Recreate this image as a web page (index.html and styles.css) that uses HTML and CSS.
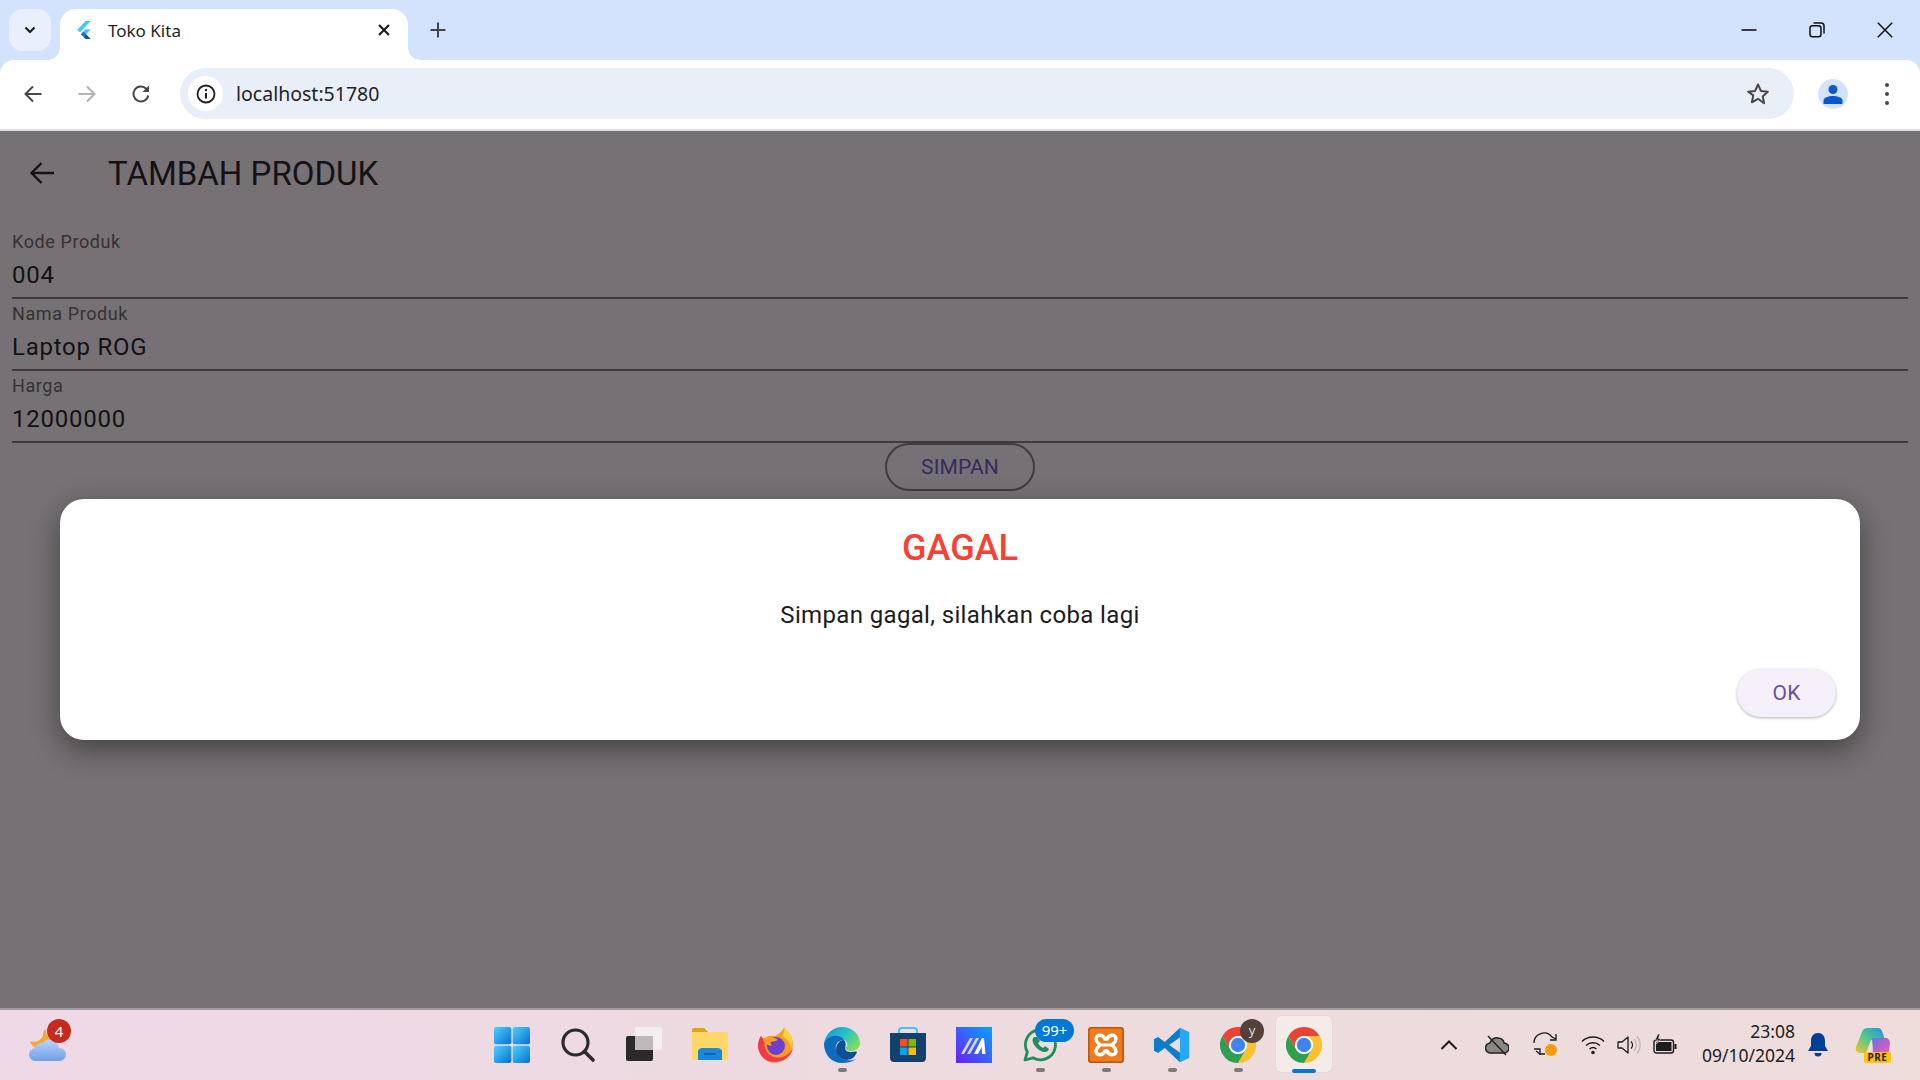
FILE: index.html
```html
<!DOCTYPE html>
<html>
  <head>
    <meta charset="utf-8">
    <title>Toko Kita</title>
    <link rel="stylesheet" href="styles.css">
  </head>
  <body>
    <svg class="defs" width="0" height="0">
      <defs>
        <symbol id="chrome" viewBox="0 0 48 48">
          <path fill="#ea4335" d="M24 12h20.8A24 24 0 0 0 3.2 12L13.6 30A12 12 0 0 1 24 12z"/>
          <path fill="#fbc02d" d="M24 12h20.8A24 24 0 0 1 24 48L34.4 30A12 12 0 0 0 24 12z"/>
          <path fill="#2e9e4f" d="M3.2 12A24 24 0 0 0 24 48L34.4 30A12 12 0 0 1 13.6 30z"/>
          <circle cx="24" cy="24" r="12" fill="#fff"/>
          <circle cx="24" cy="24" r="9.6" fill="#3f84ee"/>
        </symbol>
        <linearGradient id="winBlue" x1="0" y1="0" x2="1" y2="1">
          <stop offset="0" stop-color="#4fd0fb"/>
          <stop offset="1" stop-color="#0670d4"/>
        </linearGradient>
        <linearGradient id="edgeTop" x1="0" y1="0" x2="1" y2="0.6">
          <stop offset="0" stop-color="#0f8fd8"/>
          <stop offset="0.6" stop-color="#2cc5c0"/>
          <stop offset="1" stop-color="#7fdc5c"/>
        </linearGradient>
        <linearGradient id="mGrad" x1="0" y1="1" x2="1" y2="0">
          <stop offset="0" stop-color="#6a1ff5"/>
          <stop offset="1" stop-color="#06a4ff"/>
        </linearGradient>
        <linearGradient id="cloudGrad" x1="0" y1="0" x2="0" y2="1">
          <stop offset="0" stop-color="#bcd4f8"/>
          <stop offset="1" stop-color="#6f9fe8"/>
        </linearGradient>
        <linearGradient id="copilotA" x1="0" y1="1" x2="1" y2="0">
          <stop offset="0" stop-color="#f6c22c"/>
          <stop offset="0.5" stop-color="#4fc78c"/>
          <stop offset="1" stop-color="#1f8fe8"/>
        </linearGradient>
        <linearGradient id="copilotB" x1="0" y1="0" x2="1" y2="1">
          <stop offset="0" stop-color="#4b7be8"/>
          <stop offset="0.6" stop-color="#c85cc8"/>
          <stop offset="1" stop-color="#f0708a"/>
        </linearGradient>
      </defs>
    </svg>

    <!-- tab strip -->
    <div class="tabstrip">
      <div class="tab-search">
        <svg width="14" height="14" viewBox="0 0 14 14"><path d="M2.5 4.5 7 9l4.5-4.5" fill="none" stroke="#1f1f1f" stroke-width="2.2"/></svg>
      </div>
      <div class="tab">
        <svg class="favicon" width="16" height="18" viewBox="0 0 24 27">
          <path fill="#47c5fb" d="M14.3 0 2 13l4 4.3L22 0z"/>
          <path fill="#47c5fb" d="M14.3 12.4 7.4 19.7l4 4.2 10.6-11.5z"/>
          <path fill="#00569e" d="M11.4 23.9 14.4 27H22l-6.800-7.300z"/>
          <path fill="#0e7ac7" d="M7.400 19.700l4-4.100 3.900 4.100-3.900 4.200z"/>
        </svg>
        <span class="tab-title">Toko Kita</span>
        <svg class="tab-close" width="14" height="14" viewBox="0 0 14 14"><path d="M2 2l10 10M12 2 2 12" stroke="#1f1f1f" stroke-width="2.200"/></svg>
      </div>
      <svg class="new-tab" width="18" height="18" viewBox="0 0 18 18"><path d="M9 1.500v15M1.500 9h15" stroke="#444" stroke-width="2"/></svg>
      <div class="win-controls">
        <svg width="16" height="16" viewBox="0 0 16 16"><path d="M.5 8h15" stroke="#111" stroke-width="1.600"/></svg>
        <svg width="16" height="16" viewBox="0 0 16 16"><rect x="1" y="3.800" width="11" height="11" rx="2.500" fill="none" stroke="#111" stroke-width="1.500"/><path d="M4.500 1h7.500a3 3 0 0 1 3 3v7.500" fill="none" stroke="#111" stroke-width="1.500"/></svg>
        <svg width="16" height="16" viewBox="0 0 16 16"><path d="M.8.800l14.400 14.400M15.200.800.800 15.200" stroke="#111" stroke-width="1.500"/></svg>
      </div>
    </div>

    <!-- toolbar -->
    <div class="toolbar">
      <svg class="nav-btn" width="20" height="20" viewBox="0 0 20 20"><path d="M18.500 10H2.500M10 2.500 2.500 10l7.500 7.500" fill="none" stroke="#474747" stroke-width="2"/></svg>
      <svg class="nav-btn" width="20" height="20" viewBox="0 0 20 20"><path d="M1.500 10h16M10 2.500 17.500 10 10 17.500" fill="none" stroke="#b2b2b2" stroke-width="2"/></svg>
      <svg class="nav-btn" width="20" height="20" viewBox="0 0 20 20"><path d="M17.300 11.500A7.500 7.500 0 1 1 15.300 4.700L17.500 7" fill="none" stroke="#474747" stroke-width="2"/><path d="M18 1.500V8h-6.500z" fill="#474747"/></svg>
      <div class="omnibox">
        <div class="site-info">
          <svg width="20" height="20" viewBox="0 0 20 20"><circle cx="10" cy="10" r="8.500" fill="none" stroke="#1f1f1f" stroke-width="1.800"/><path d="M10 9v5.500" stroke="#1f1f1f" stroke-width="2"/><circle cx="10" cy="6" r="1.200" fill="#1f1f1f"/></svg>
        </div>
        <span class="url">localhost:51780</span>
        <svg class="star" width="24" height="24" viewBox="0 0 24 24"><path d="M12 2.500l2.900 6.400 6.900.8-5.100 4.700 1.400 6.900L12 16.800l-6.100 3.500 1.400-6.900L2.200 9.700l6.900-.8z" fill="none" stroke="#474747" stroke-width="2" stroke-linejoin="round"/></svg>
      </div>
      <div class="avatar">
        <svg width="20" height="20" viewBox="0 0 20 20"><circle cx="10" cy="5.500" r="4.500" fill="#0b57d0"/><path d="M.5 20v-3.500c0-3 5-4.500 9.500-4.500s9.500 1.500 9.500 4.500V20z" fill="#0b57d0"/></svg>
      </div>
      <div class="kebab"><span></span><span></span><span></span></div>
    </div>

    <!-- flutter page, dimmed by the dialog barrier -->
    <main class="page">
      <header class="appbar">
        <svg class="appbar-back" width="26" height="26" viewBox="0 0 26 26"><path d="M25 13H3M12.500 3 2.500 13l10 10" fill="none" stroke="#141214" stroke-width="2.400"/></svg>
        <h1 class="appbar-title">TAMBAH PRODUK</h1>
      </header>
      <form class="form">
        <div class="field">
          <label class="field-label">Kode Produk</label>
          <div class="field-value">004</div>
        </div>
        <div class="field">
          <label class="field-label">Nama Produk</label>
          <div class="field-value">Laptop ROG</div>
        </div>
        <div class="field">
          <label class="field-label">Harga</label>
          <div class="field-value">12000000</div>
        </div>
        <button type="button" class="save-btn">SIMPAN</button>
      </form>

      <div class="dialog">
        <h2 class="dialog-title">GAGAL</h2>
        <p class="dialog-text">Simpan gagal, silahkan coba lagi</p>
        <div class="dialog-actions">
          <button type="button" class="ok-btn">OK</button>
        </div>
      </div>
    </main>

    <!-- windows taskbar -->
    <footer class="taskbar">
      <div class="weather">
        <svg width="40" height="40" viewBox="0 0 40 40">
          <path d="M18 3a11 11 0 0 0-3 8 10 10 0 0 1-13 5c2 6 8 10 14 9l8-10c-4-2-7-7-6-12z" fill="#f5a733"/>
          <path d="M8 36a6.500 6.500 0 0 1-1-13c1-4 5-6 8-5 2-4 9-5 13-1 2 2 3 4 3 6a6.500 6.500 0 0 1 1 13z" fill="url(#cloudGrad)"/>
        </svg>
        <span class="weather-badge">4</span>
      </div>

      <div class="apps">
        <div class="app">
          <svg width="36" height="36" viewBox="0 0 36 36">
            <rect x="0" y="0" width="17.300" height="17.300" rx="2" fill="url(#winBlue)"/>
            <rect x="18.700" y="0" width="17.300" height="17.300" rx="2" fill="url(#winBlue)"/>
            <rect x="0" y="18.700" width="17.300" height="17.300" rx="2" fill="url(#winBlue)"/>
            <rect x="18.700" y="18.700" width="17.300" height="17.300" rx="2" fill="url(#winBlue)"/>
          </svg>
        </div>
        <div class="app">
          <svg width="36" height="36" viewBox="0 0 36 36"><circle cx="15.500" cy="15.500" r="12.500" fill="none" stroke="#2b2b2b" stroke-width="3.200"/><path d="M24.500 24.500 33 33" stroke="#2b2b2b" stroke-width="3.600" stroke-linecap="round"/></svg>
        </div>
        <div class="app">
          <svg width="36" height="36" viewBox="0 0 36 36"><rect x="0" y="9" width="27" height="25" rx="2" fill="#2a2a2a"/><rect x="9" y="0" width="27" height="23" rx="2" fill="#f4f0f0" fill-opacity=".88"/><rect x="9" y="9" width="18" height="14" fill="#bdb9b9"/></svg>
        </div>
        <div class="app">
          <svg width="36" height="36" viewBox="0 0 36 36"><path d="M0 3a2 2 0 0 1 2-2h10l4 4h18a2 2 0 0 1 2 2v4H0z" fill="#e0a412"/><path d="M0 5h36v26a2 2 0 0 1-2 2H0z" fill="#fcd768"/><path d="M6 33v-9a5 5 0 0 1 5-3h14a5 5 0 0 1 5 3v9z" fill="#1a88d8"/><path d="M12 27h12" stroke="#0d5a9c" stroke-width="1.600"/></svg>
        </div>
        <div class="app">
          <svg width="36" height="36" viewBox="0 0 36 36">
            <path d="M26 0c1 3 5 4 7 9 4 9 1 19-7 24S8 36 3 28C-1 22-1 15 3 9l2 3c3-3 8-4 12-3 4-2 8-5 9-9z" fill="#fd9a22"/>
            <path d="M26 0c1 3 5 4 7 9 2 5 1 9 0 13-1-7-5-11-9-13 2-3 3-6 2-9z" fill="#ffd43a"/>
            <path d="M3 9C-1 15-1 22 3 28c5 8 15 8 23 5 5-3 8-7 9-12-4 8-12 11-19 9C9 28 5 20 7 14z" fill="#ee3a4f"/>
            <circle cx="18" cy="19" r="9" fill="#6d3fd0"/>
            <path d="M5 12c5-2 11-2 15 1-3 1-5 2-8 2 1 1 2 3 1 4C9 18 6 16 5 12z" fill="#ff9a22"/>
          </svg>
        </div>
        <div class="app has-dot">
          <svg width="36" height="36" viewBox="0 0 36 36">
            <path d="M0 17C1 7 9 0 18 0c10 0 18 7 18 16 0 5-4 8-9 8-3 0-6-1-6-3 2-1 3-3 2-5-2-5-9-6-14-3-4 2-7 5-9 4z" fill="url(#edgeTop)"/>
            <path d="M0 17c2-6 8-9 13-8 3 0 6 2 7 4-6 0-9 4-8 10 1 5 5 9 10 10 5 1 8 0 10-1-4 3-9 4-14 4C8 36 0 28 0 17z" fill="#0c6cc0"/>
            <path d="M12 23c0-5 3-10 8-10 2 2 2 5 1 8 0 3 3 4 6 4 2 0 5-1 6 0-2 5-5 8-11 8-5-1-10-5-10-10z" fill="#0d4f96"/>
          </svg>
        </div>
        <div class="app">
          <svg width="36" height="36" viewBox="0 0 36 36">
            <path d="M9 7V4a3 3 0 0 1 3-3h12a3 3 0 0 1 3 3v3" fill="none" stroke="#3cc6ea" stroke-width="2"/>
            <path d="M0 6h36v25a4 4 0 0 1-4 4H4a4 4 0 0 1-4-4z" fill="#14406f"/>
            <rect x="10" y="12" width="7.500" height="7.500" fill="#f25022"/>
            <rect x="18.500" y="12" width="7.500" height="7.500" fill="#7fba00"/>
            <rect x="10" y="20.500" width="7.500" height="7.500" fill="#00a4ef"/>
            <rect x="18.500" y="20.500" width="7.500" height="7.500" fill="#ffb900"/>
          </svg>
        </div>
        <div class="app">
          <svg width="36" height="36" viewBox="0 0 36 36">
            <rect width="36" height="36" fill="url(#mGrad)"/>
            <path d="M5 27 14 11h3L8 27zM11 27l9-16h3l-9 16z" fill="#d8d4fb"/>
            <path d="M18 27l8-16h2l1.500 16H26l-.300-7-3.700 7z" fill="#fff"/>
          </svg>
        </div>
        <div class="app has-dot">
          <svg width="36" height="36" viewBox="0 0 36 36">
            <path d="M3 33l2.300-8A15 15 0 1 1 11 30.800z" fill="none" stroke="#1e8f5a" stroke-width="2.800" stroke-linejoin="round"/>
            <path d="M12 10c-2 2-2 5 1 9s7 6 10 6c2 0 4-2 4-3l-4-3-2 2c-2-1-4-3-5-5l2-2-3-4z" fill="#1e8f5a"/>
          </svg>
          <span class="count-badge">99+</span>
        </div>
        <div class="app has-dot">
          <svg width="36" height="36" viewBox="0 0 36 36">
            <rect width="36" height="36" rx="3" fill="#f07b1d"/>
            <rect x=".800" y=".800" width="34.400" height="34.400" rx="3" fill="none" stroke="#b9560f" stroke-width="1.600"/>
            <path d="M17 12C15 7 8 7 8 12c0 3 2 4 4 6-2 2-4 3-4 6 0 5 7 5 9 0h2c2 5 9 5 9 0 0-3-2-4-4-6 2-2 4-3 4-6 0-5-7-5-9 0z" fill="none" stroke="#fff" stroke-width="3.400"/>
            <path d="M13 18h10" stroke="#fff" stroke-width="3"/>
          </svg>
        </div>
        <div class="app has-dot">
          <svg width="36" height="36" viewBox="0 0 100 100">
            <path d="M72 2 98 14v72L72 98z" fill="#24a9f2"/>
            <path d="M72 2v27L42 50l30 21v27L30 58 11 72 0 66V34l11-6 19 14z" fill="#0a7cc8"/>
          </svg>
        </div>
        <div class="app has-dot">
          <svg width="36" height="36"><use href="#chrome"/></svg>
          <span class="profile-badge">y</span>
        </div>
        <div class="app is-active">
          <svg width="36" height="36"><use href="#chrome"/></svg>
        </div>
      </div>

      <div class="tray">
        <svg width="24" height="24" viewBox="0 0 24 24"><path d="M4.500 16 12 8.500 19.500 16" fill="none" stroke="#1c1c1c" stroke-width="2"/></svg>
        <svg width="24" height="24" viewBox="0 0 24 24"><path d="M6 20a5 5 0 0 1-1-10c1-4 5-6 8-5 3 0 6 2 6 5a5 5 0 0 1 0 10z" fill="#8b8785" stroke="#222" stroke-width="1.500"/><path d="M3 3l18 19" stroke="#222" stroke-width="1.500"/></svg>
        <svg width="24" height="26" viewBox="0 0 24 26"><path d="M1 11a10 10 0 0 1 18-6l4 2" fill="none" stroke="#1c1c1c" stroke-width="1.300"/><path d="M23 2v6h-6M1 17h6v6" fill="none" stroke="#1c1c1c" stroke-width="1.300"/><path d="M3 19l4 3h5" fill="none" stroke="#1c1c1c" stroke-width="1.300"/><circle cx="18" cy="18" r="6" fill="#f79a0e"/></svg>
        <div class="tray-status">
          <svg width="24" height="24" viewBox="0 0 24 24"><path d="M1 8.500a16 16 0 0 1 22 0M5 12.500a10.500 10.500 0 0 1 14 0M8.500 16a5.500 5.500 0 0 1 7 0" fill="none" stroke="#1c1c1c" stroke-width="1.500"/><circle cx="12" cy="19.500" r="1.800" fill="#1c1c1c"/></svg>
          <svg width="24" height="24" viewBox="0 0 24 24"><path d="M1 9v6h4l6 5V4L5 9z" fill="none" stroke="#1c1c1c" stroke-width="1.300" stroke-linejoin="round"/><path d="M14 8.500a5 5 0 0 1 0 7" fill="none" stroke="#1c1c1c" stroke-width="1.300"/><path d="M17 6a9 9 0 0 1 0 12M20 3.500a13 13 0 0 1 0 17" fill="none" stroke="#bdb8b6" stroke-width="1.300"/></svg>
          <svg width="24" height="24" viewBox="0 0 24 24"><rect x="1" y="7" width="19.500" height="13" rx="2.500" fill="none" stroke="#1c1c1c" stroke-width="1.400"/><rect x="3" y="9" width="15.500" height="9" fill="#1c1c1c"/><rect x="21.500" y="11" width="2" height="5" fill="#1c1c1c"/><path d="M5 1 2 7h3l-1.500 4L8 5.500H5.500L7 1z" fill="#1c1c1c" stroke="#efdddd" stroke-width=".6"/></svg>
        </div>
        <div class="clock">
          <span>23:08</span>
          <span>09/10/2024</span>
        </div>
        <svg class="bell" width="20" height="24" viewBox="0 0 20 24"><path d="M10 0c4.500 0 7 3.500 7 8v5l3 5H0l3-5V8c0-4.500 2.500-8 7-8z" fill="#003f98"/><path d="M6.500 20h7a3.500 3.500 0 0 1-7 0z" fill="#003f98"/></svg>
        <div class="copilot">
          <svg width="35" height="30" viewBox="0 0 35 30">
            <path d="M12 1h11c2 0 3 1 4 3l3 9H16l-5 13H5c-3 0-5-3-4-6L7 5c1-3 3-4 5-4z" fill="url(#copilotA)"/>
            <path d="M17 11h13c3 0 5 2 5 5l-1 8c-1 3-3 5-6 5H14c2-1 3-3 4-5z" fill="url(#copilotB)"/>
          </svg>
          <span class="pre-tag">PRE</span>
        </div>
      </div>
    </footer>
  </body>
</html>
```

FILE: styles.css
```css
* {
  box-sizing: border-box;
}

html, body {
  margin: 0;
  height: 100%;
  overflow: hidden;
}

body {
  display: flex;
  flex-direction: column;
  width: 1920px;
  height: 1080px;
  background: #d3e3fd;
  font-family: Roboto, sans-serif;
}

.defs {
  position: absolute;
}

svg {
  display: block;
  flex: none;
}

/* Tab strip */
.tabstrip {
  display: flex;
  align-items: flex-start;
  height: 60px;
  padding: 9px 0 0 9px;
  background: #d3e3fd;
}

.tab-search {
  display: flex;
  align-items: center;
  justify-content: center;
  width: 42px;
  height: 42px;
  margin-right: 9px;
  border-radius: 14px;
  background: #e9f0fd;
}

.tab {
  position: relative;
  display: flex;
  align-items: center;
  width: 348px;
  height: 51px;
  padding: 0 17px 9px 16px;
  border-radius: 16px 16px 0 0;
  background: #fff;
}

.tab::before,
.tab::after {
  content: "";
  position: absolute;
  bottom: 0;
  width: 12px;
  height: 12px;
}

.tab::before {
  left: -12px;
  background: radial-gradient(circle at 0 0, #d3e3fd 11.500px, #fff 12px);
}

.tab::after {
  right: -12px;
  background: radial-gradient(circle at 100% 0, #d3e3fd 11.500px, #fff 12px);
}

.favicon {
  margin-right: 16px;
}

.tab-title {
  flex: 1;
  font-family: "Noto Sans", sans-serif;
  font-size: 17px;
  color: #1f1f1f;
  white-space: nowrap;
}

.new-tab {
  margin: 12px 0 0 21px;
}

.win-controls {
  display: flex;
  gap: 52px;
  margin: 13px 27px 0 auto;
}

/* Toolbar */
.toolbar {
  display: flex;
  align-items: center;
  height: 71px;
  padding: 0 0 2px 23px;
  border-bottom: 2px solid #dfe0e2;
  border-radius: 14px 14px 0 0;
  background: #fff;
}

.nav-btn {
  margin-right: 34px;
}

.nav-btn:nth-child(3) {
  margin-right: 29px;
}

.omnibox {
  display: flex;
  align-items: center;
  width: 1614px;
  height: 51px;
  padding: 0 24px 0 8px;
  border-radius: 26px;
  background: #e9eff9;
}

.site-info {
  display: flex;
  align-items: center;
  justify-content: center;
  width: 35px;
  height: 35px;
  margin-right: 13px;
  border-radius: 50%;
  background: #fff;
}

.url {
  flex: 1;
  font-family: "Noto Sans", sans-serif;
  font-size: 19.500px;
  color: #1f1f1f;
}

.avatar {
  display: flex;
  align-items: flex-end;
  justify-content: center;
  width: 30px;
  height: 30px;
  margin-left: 24px;
  padding-bottom: 5px;
  border-radius: 50%;
  background: #d3e3fd;
}

.kebab {
  display: flex;
  flex-direction: column;
  gap: 5px;
  margin-left: 37px;
}

.kebab span {
  width: 4px;
  height: 4px;
  border-radius: 50%;
  background: #474747;
}

/* Flutter page */
.page {
  position: relative;
  flex: 1;
  background: #767174;
}

.appbar {
  display: flex;
  align-items: center;
  height: 84px;
  padding-left: 29px;
}

.appbar-title {
  margin: 0 0 0 53px;
  font-size: 33px;
  font-weight: 400;
  color: #141214;
}

.form {
  display: flex;
  flex-direction: column;
  align-items: center;
  padding: 12px 12px 0;
}

.field {
  width: 100%;
  height: 72px;
  padding-top: 1px;
  border-bottom: 2px solid #3e3a3d;
}

.field-label {
  display: block;
  height: 29px;
  font-size: 18px;
  line-height: 27px;
  letter-spacing: .6px;
  color: #353235;
}

.field-value {
  height: 36px;
  font-size: 24px;
  line-height: 36px;
  letter-spacing: .75px;
  color: #131113;
}

.save-btn {
  width: 150px;
  height: 48px;
  padding: 0;
  border: 2px solid #403c3f;
  border-radius: 24px;
  background: transparent;
  font-family: Roboto, sans-serif;
  font-size: 21px;
  letter-spacing: .15px;
  color: #352c5f;
}

/* Dialog sits over the dimmed page */
.dialog {
  position: absolute;
  top: 368px;
  left: 60px;
  width: 1800px;
  height: 241px;
  padding: 24px;
  border-radius: 24px;
  background: #fff;
  box-shadow: 0 10px 30px rgba(0, 0, 0, .42);
}

.dialog-title {
  margin: 0;
  font-size: 36px;
  line-height: 50px;
  font-weight: 500;
  text-align: center;
  color: #f44336;
}

.dialog-text {
  margin: 24px 0 0;
  font-size: 24px;
  line-height: 36px;
  letter-spacing: .35px;
  text-align: center;
  color: #1d1b20;
}

.dialog-actions {
  display: flex;
  justify-content: flex-end;
  margin-top: 36px;
}

.ok-btn {
  width: 99px;
  height: 48px;
  padding: 0;
  border: none;
  border-radius: 24px;
  background: #f5f0f9;
  box-shadow: 0 1px 3px rgba(0, 0, 0, .3);
  font-family: Roboto, sans-serif;
  font-size: 21px;
  letter-spacing: .15px;
  color: #6750a4;
}

/* Taskbar */
.taskbar {
  display: flex;
  align-items: center;
  height: 72px;
  border-top: 2px solid #a29b9e;
  background: linear-gradient(90deg, #efd9e7, #eddbdf 50%, #eedddb);
}

.weather {
  position: relative;
  width: 40px;
  height: 40px;
  margin-left: 28px;
}

.weather-badge {
  position: absolute;
  top: -6px;
  right: -3px;
  width: 24px;
  height: 24px;
  border-radius: 50%;
  background: #c42b1c;
  font-family: "Noto Sans", sans-serif;
  font-size: 15px;
  line-height: 24px;
  text-align: center;
  color: #fff;
}

.apps {
  display: flex;
  margin-left: 411px;
}

.app {
  position: relative;
  display: flex;
  align-items: center;
  justify-content: center;
  width: 66px;
  height: 70px;
}

.has-dot::after,
.is-active::after {
  content: "";
  position: absolute;
  bottom: 8px;
  left: 50%;
  width: 9px;
  height: 4px;
  margin-left: -4.500px;
  border-radius: 2px;
  background: #7d7a7a;
}

.is-active::before {
  content: "";
  position: absolute;
  top: 6px;
  left: 5px;
  width: 56px;
  height: 56px;
  border-radius: 5px;
  background: #f5ecea;
  box-shadow: 0 0 1px rgba(0, 0, 0, .2);
}

.is-active svg {
  position: relative;
}

.is-active::after {
  bottom: 7px;
  width: 24px;
  margin-left: -12px;
  background: #0078d4;
}

.count-badge {
  position: absolute;
  top: 9px;
  left: 28px;
  width: 39px;
  height: 23px;
  border-radius: 12px;
  background: #0078d4;
  font-family: "Noto Sans", sans-serif;
  font-size: 15px;
  line-height: 23px;
  text-align: center;
  color: #fff;
}

.profile-badge {
  position: absolute;
  top: 9px;
  left: 35px;
  width: 24px;
  height: 24px;
  border-radius: 50%;
  background: #54413a;
  font-family: "Noto Sans", sans-serif;
  font-size: 13px;
  line-height: 22px;
  text-align: center;
  color: #ddd;
}

.tray {
  display: flex;
  align-items: center;
  gap: 24px;
  margin-left: 100px;
}

.tray-status {
  display: flex;
  gap: 12px;
}

.clock {
  display: flex;
  flex-direction: column;
  align-items: flex-end;
  width: 94px;
  margin-top: -4px;
  font-family: "Noto Sans", sans-serif;
  font-size: 17.500px;
  line-height: 24px;
  color: #1c1c1c;
}

.bell {
  margin-left: -11px;
}

.copilot {
  position: relative;
  width: 35px;
  height: 36px;
  margin-left: 3px;
}

.pre-tag {
  position: absolute;
  right: -1px;
  bottom: 0;
  width: 27px;
  height: 11px;
  border-radius: 2px;
  background: #ffc20e;
  font-family: "Noto Sans", sans-serif;
  font-size: 10px;
  font-weight: 700;
  line-height: 11px;
  letter-spacing: .5px;
  text-align: center;
  color: #1c1c1c;
}
```
